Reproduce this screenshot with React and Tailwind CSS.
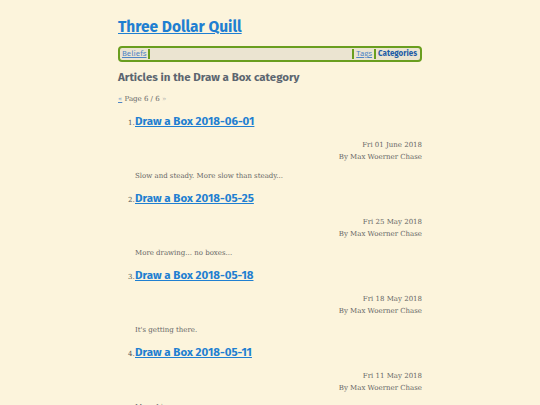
export default function App() {
  const posts = [
    { n: 1, title: "Draw a Box 2018-06-01", date: "Fri 01 June 2018", summary: "Slow and steady. More slow than steady..." },
    { n: 2, title: "Draw a Box 2018-05-25", date: "Fri 25 May 2018", summary: "More drawing... no boxes..." },
    { n: 3, title: "Draw a Box 2018-05-18", date: "Fri 18 May 2018", summary: "It's getting there." },
    { n: 4, title: "Draw a Box 2018-05-11", date: "Fri 11 May 2018", summary: "More Lines..." },
  ];
  const heading = { fontFamily: '"Fira Sans", Lato, "Open Sans", sans-serif' };
  const body = { fontFamily: '"Roboto Slab", "DejaVu Serif", serif' };

  return (
    <div className="min-h-screen bg-[#fcf4dc] text-[#555]">
      <div className="w-[304px] mx-auto pt-[15px]">
        <h1 className="text-[15.5px] font-bold leading-[24px]" style={heading}>
          <a href="#" className="text-[#1f7fd1] underline">Three Dollar Quill</a>
        </h1>
        <nav
          className="mt-[7px] flex items-stretch h-[16px] border-2 border-[#6a9e1f] rounded-[4px] bg-[#ebe4d1] text-[8px] leading-[12px] px-[1px]"
          style={heading}
        >
          <a href="#" className="text-[#4f86c6] underline px-[1px]">Beliefs</a>
          <span className="w-[2px] bg-[#6a9e1f] my-[1px]" />
          <span className="flex-1" />
          <span className="w-[2px] bg-[#6a9e1f] my-[1px]" />
          <a href="#" className="text-[#4f86c6] underline px-[2px]">Tags</a>
          <span className="w-[2px] bg-[#6a9e1f] my-[1px]" />
          <a href="#" className="text-[#1d5ca6] font-bold px-[2px]">Categories</a>
        </nav>
        <h2 className="mt-[6px] text-[11.5px] font-bold text-[#5c6670] leading-[18px]" style={heading}>
          Articles in the Draw a Box category
        </h2>
        <p className="mt-[8px] text-[7px] leading-[10px] text-[#666]" style={body}>
          <a href="#" className="text-[#4f86c6] underline">«</a> Page 6 / 6 <span className="text-[#aaa]">»</span>
        </p>
        <ol className="mt-[9px] pl-[17px]">
          {posts.map((p) => (
            <li key={p.n} className="mb-[8px]">
              <div className="flex items-baseline">
                <span className="text-[7px] text-[#555] w-[7px] -ml-[7px]" style={body}>{p.n}.</span>
                <a href="#" className="text-[11.5px] font-bold text-[#1f7fd1] underline leading-[16px]" style={heading}>
                  {p.title}
                </a>
              </div>
              <div className="mt-[10px] text-right text-[7px] leading-[12px] text-[#666]" style={body}>
                <div>{p.date}</div>
                <div>By Max Woerner Chase</div>
              </div>
              <p className="mt-[7px] text-[7px] leading-[12px] text-[#666]" style={body}>{p.summary}</p>
            </li>
          ))}
        </ol>
      </div>
    </div>
  );
}
